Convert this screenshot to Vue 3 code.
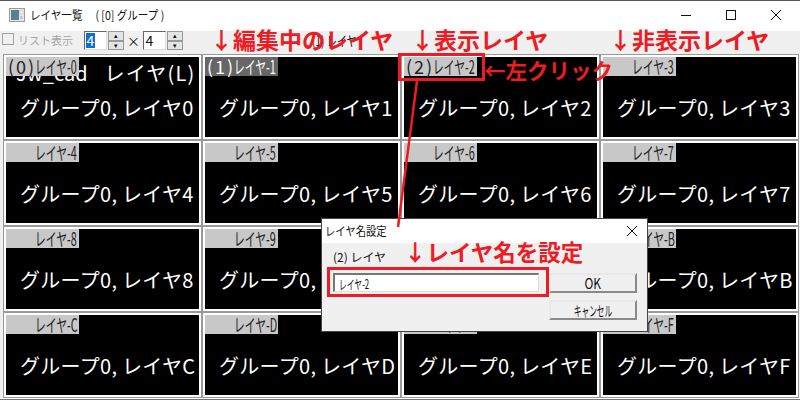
<template>
  <div class="window">
    <!-- タイトルバー -->
    <div class="titlebar">
      <svg class="app-icon" width="16" height="16" viewBox="0 0 16 16">
        <rect x="0.5" y="1.5" width="15" height="13" fill="#e8e8e8" stroke="#9a9a9a" />
        <rect x="2" y="3" width="8" height="10" fill="#5a7f8f" />
        <rect x="11" y="4" width="3" height="3" fill="#fff" stroke="#aaa" stroke-width="0.5" />
        <rect x="11" y="9" width="3" height="3" fill="#c9c9c9" />
      </svg>
      <span class="title">レイヤ一覧　 ( [0] グループ )</span>
      <div class="win-buttons">
        <svg width="12" height="12" viewBox="0 0 12 12"><path d="M1 6.5h10" stroke="#111" fill="none" /></svg>
        <svg width="12" height="12" viewBox="0 0 12 12"><rect x="1.5" y="1.5" width="9" height="9" stroke="#111" fill="none" /></svg>
        <svg width="12" height="12" viewBox="0 0 12 12"><path d="M1 1l10 10M11 1L1 11" stroke="#111" fill="none" /></svg>
      </div>
    </div>

    <!-- ツールバー -->
    <div class="toolbar">
      <span class="check"></span>
      <span class="check-label">リスト表示</span>
      <span class="spin-input"><span class="selected">4</span></span>
      <span class="spin"><i>▴</i><i>▾</i></span>
      <span class="times">×</span>
      <span class="spin-input"><span class="digit">4</span></span>
      <span class="spin"><i>▴</i><i>▾</i></span>
      <span class="current">(1) レイヤ</span>
    </div>

    <!-- レイヤ一覧 -->
    <div class="grid">
      <div v-for="cell in cells" :key="cell.id" class="cell">
        <div class="screen">
          <div v-if="cell.id === '0'" class="cad-text">Jw_cad<span class="cad-layer">レイヤ(L)</span></div>
          <div class="tag" :class="{ active: cell.id === '1' }">
            <span class="tag-no">{{ cell.no }}</span><span class="tag-name">レイヤ-{{ cell.id }}</span>
          </div>
          <div class="caption">グループ0, レイヤ{{ cell.id }}</div>
        </div>
      </div>
    </div>
    <div class="bottom"></div>

    <!-- 注釈 -->
    <div class="note n1">↓編集中のレイヤ</div>
    <div class="note n2">↓表示レイヤ</div>
    <div class="note n3">↓非表示レイヤ</div>
    <div class="note n4">←左クリック</div>
    <div class="red-box layer-box"></div>

    <!-- レイヤ名設定ダイアログ -->
    <div class="dialog">
      <div class="dlg-title">
        <span class="dlg-caption">レイヤ名設定</span>
        <svg width="12" height="12" viewBox="0 0 12 12"><path d="M1 1l10 10M11 1L1 11" stroke="#111" fill="none" /></svg>
      </div>
      <div class="dlg-body">
        <div class="dlg-label">(2) レイヤ</div>
        <div class="dlg-row">
          <div class="dlg-input"><span>レイヤ-2</span></div>
          <div class="dlg-btn ok"><span>OK</span></div>
        </div>
        <div class="dlg-btn cancel"><span>キャンセル</span></div>
      </div>
      <div class="note n5">↓レイヤ名を設定</div>
      <div class="red-box name-box"></div>
    </div>

    <svg class="leader" width="40" height="160" viewBox="0 0 40 160">
      <path d="M24 2L5 148" stroke="#ed1c24" stroke-width="2.5" fill="none" />
    </svg>
  </div>
</template>

<script setup>
const ids = ['0', '1', '2', '3', '4', '5', '6', '7', '8', '9', 'A', 'B', 'C', 'D', 'E', 'F']

// 先頭3枚だけ番号が付く
const cells = ids.map((id, i) => ({
  id,
  no: i < 3 ? `(${i})` : ''
}))
</script>

<style>
html,
body {
  margin: 0;
  background: #fff;
}
</style>

<style scoped>
.window {
  position: relative;
  width: 800px;
  height: 400px;
  overflow: hidden;
  background: #f0f0f0;
  border-top: 1px solid #555;
  box-sizing: border-box;
  font-family: "Noto Sans CJK JP", "Liberation Sans", sans-serif;
  color: #111;
}

.titlebar {
  display: flex;
  align-items: center;
  height: 30px;
  padding: 0 0 2px 9px;
  box-sizing: border-box;
  background: #fff;
}

.app-icon {
  margin-right: 5px;
}

.title {
  display: inline-block;
  font-size: 12px;
  line-height: 16px;
  white-space: pre;
  transform: scaleX(0.88);
  transform-origin: left center;
}

.win-buttons {
  display: flex;
  gap: 33px;
  margin-left: auto;
  margin-right: 18px;
}

.toolbar {
  position: relative;
  display: flex;
  align-items: flex-start;
  height: 23px;
  padding-left: 2px;
  font-size: 12px;
}

.check {
  width: 10px;
  height: 10px;
  margin: 2px 4px 0 0;
  border: 1px solid #a0a0a0;
}

.check-label {
  width: 66px;
  margin-top: 1px;
  font-size: 11px;
  line-height: 16px;
  color: #a5a5a5;
}

.spin-input {
  display: flex;
  align-items: center;
  width: 20px;
  height: 17px;
  padding-left: 1px;
  border: 1px solid #666;
  border-right-color: #ddd;
  border-bottom-color: #ddd;
  background: #fff;
  font-size: 14px;
  line-height: 15px;
}

.selected {
  width: 9px;
  background: #0a6fd8;
  color: #fff;
  text-align: center;
}

.digit {
  width: 9px;
  text-align: center;
}

.spin {
  display: flex;
  flex-direction: column;
  width: 16px;
  height: 19px;
  margin-left: 1px;
}

.spin i {
  flex: 1;
  background: #e4e4e4;
  border: 1px solid #999;
  font-style: normal;
  font-size: 7px;
  line-height: 7px;
  text-align: center;
}

.times {
  width: 19px;
  text-align: center;
  font-size: 13px;
  line-height: 19px;
}

.current {
  position: absolute;
  left: 312px;
  top: 0;
  font-size: 14px;
  line-height: 18px;
  white-space: nowrap;
  transform: scaleX(0.72);
  transform-origin: left center;
}

.grid {
  display: grid;
  grid-template-columns: repeat(4, 199px);
  grid-auto-rows: 86px;
  padding-left: 3px;
  background: #f0f0f0;
}

.cell {
  box-sizing: border-box;
  padding: 2px;
  border: 1px solid #9a9a9a;
  background: #fff;
}

.screen {
  position: relative;
  height: 100%;
  padding: 39px 0 0 14px;
  box-sizing: border-box;
  background: #000;
  color: #fff;
}

.tag {
  position: absolute;
  left: 0;
  top: 0;
  display: flex;
  align-items: center;
  width: 73px;
  height: 19px;
  background: #c8c8c8;
  color: #222;
  font-size: 18px;
  line-height: 19px;
  white-space: nowrap;
}

.tag.active {
  background: #666;
  color: #fff;
}

.tag-no {
  width: 29px;
  flex: none;
  padding-left: 2px;
  box-sizing: border-box;
  letter-spacing: 2px;
}

.tag-name {
  display: inline-block;
  transform: scaleX(0.6);
  transform-origin: left center;
}

.cad-text {
  position: absolute;
  left: 10px;
  top: 4px;
  font-size: 20px;
  line-height: 24px;
  white-space: nowrap;
}

.cad-layer {
  margin-left: 17px;
  letter-spacing: 1.2px;
}

.caption {
  font-size: 20px;
  line-height: 24px;
  letter-spacing: 0.3px;
  white-space: nowrap;
}

.bottom {
  height: 1px;
  border-bottom: 1px solid #777;
  background: #fff;
}

.note {
  position: absolute;
  color: #ed1c24;
  font-weight: 700;
  font-size: 23px;
  line-height: 28px;
  white-space: nowrap;
}

.n1 {
  left: 210px;
  top: 24px;
}

.n2 {
  left: 411px;
  top: 24px;
}

.n3 {
  left: 609px;
  top: 24px;
}

.n4 {
  left: 484px;
  top: 55px;
  font-size: 21.5px;
}

.red-box {
  position: absolute;
  box-sizing: border-box;
  border: 3px solid #ed1c24;
}

.layer-box {
  left: 398px;
  top: 52px;
  width: 87px;
  height: 28px;
}

.leader {
  position: absolute;
  left: 393px;
  top: 78px;
}

.dialog {
  position: absolute;
  left: 321px;
  top: 217px;
  width: 327px;
  height: 114px;
  box-sizing: border-box;
  border: 1px solid #444;
  background: #f0f0f0;
}

.dlg-title {
  display: flex;
  align-items: center;
  justify-content: space-between;
  height: 24px;
  padding: 0 9px 0 3px;
  background: #fff;
  font-size: 12px;
  line-height: 16px;
}

.dlg-caption {
  display: inline-block;
  transform: scaleX(0.86);
  transform-origin: left center;
}

.dlg-body {
  padding: 6px 10px 0 11px;
  font-size: 12px;
}

.dlg-label {
  height: 24px;
  line-height: 16px;
  font-size: 12px;
}

.dlg-row {
  display: flex;
  justify-content: space-between;
}

.dlg-input {
  display: flex;
  align-items: center;
  width: 206px;
  height: 19px;
  box-sizing: border-box;
  padding-left: 4px;
  border: 2px solid #777;
  border-right: 1px solid #ddd;
  border-bottom: 1px solid #ddd;
  background: #fff;
  font-size: 13px;
  line-height: 15px;
}

.dlg-input span {
  display: inline-block;
  transform: scaleX(0.6);
  transform-origin: left center;
  white-space: nowrap;
}

.dlg-btn {
  display: flex;
  align-items: center;
  justify-content: center;
  width: 88px;
  height: 20px;
  box-sizing: border-box;
  border: 2px solid #8a8a8a;
  border-top-color: #e8e8e8;
  border-left-color: #e8e8e8;
  background: #f0f0f0;
  font-size: 14px;
  line-height: 16px;
}

.cancel {
  margin: 7px 0 0 auto;
}

.cancel span {
  display: inline-block;
  white-space: nowrap;
  transform: scaleX(0.55);
  transform-origin: center;
}

.ok span {
  display: inline-block;
  transform: scaleX(0.85);
}

.n5 {
  left: 82px;
  top: 18px;
  font-size: 22.5px;
}

.name-box {
  left: 5px;
  top: 48px;
  width: 222px;
  height: 30px;
}
</style>
